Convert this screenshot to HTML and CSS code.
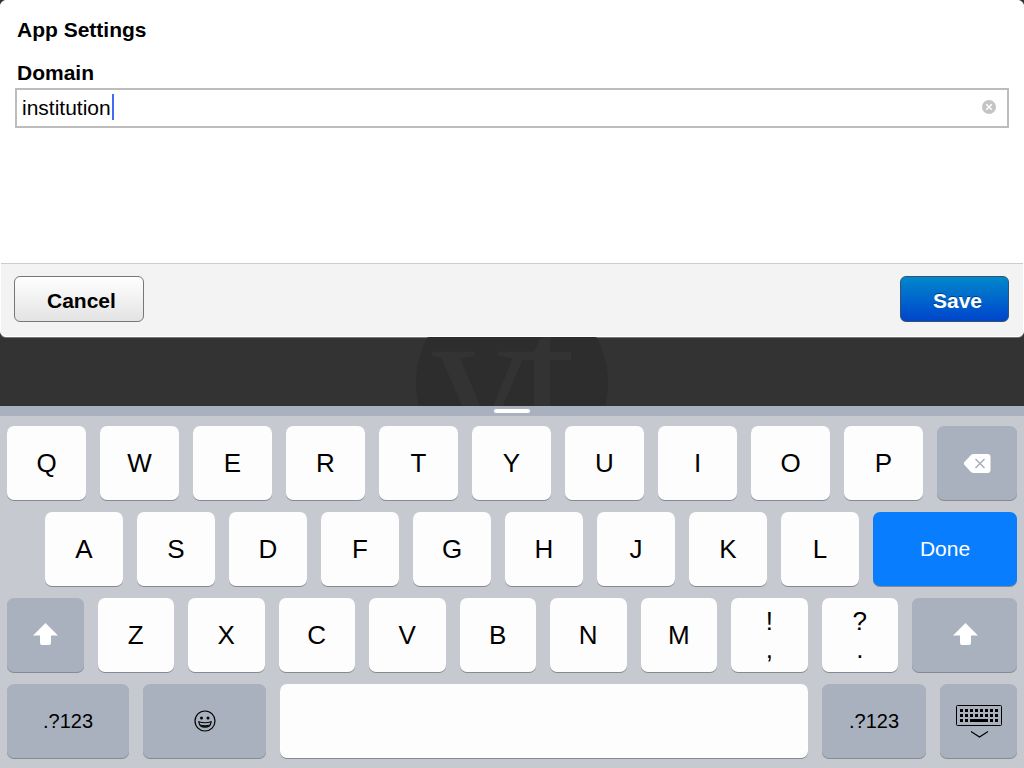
FILE: index.html
```html
<!DOCTYPE html>
<html lang="en">
<head>
    <meta charset="UTF-8">
    <meta name="viewport" content="width=device-width, initial-scale=1.0">
    <title>App Settings</title>
    <link rel="stylesheet" href="styles.css">
</head>
<body>
    <form class="dialog">
        <div class="dialog-body">
            <h1>App Settings</h1>
            <label for="domain">Domain</label>
            <div class="field">
                <input type="text" id="domain" value="institution" autocomplete="off" spellcheck="false">
                <span class="caret"></span>
                <button type="button" class="clear" aria-label="Clear">
                    <svg width="14" height="14" viewBox="0 0 14 14">
                        <circle cx="7" cy="7" r="7" fill="#c4c4c4"/>
                        <path d="M4.2 4.2l5.6 5.6M9.8 4.2L4.2 9.8" stroke="#fff" stroke-width="1.5"/>
                    </svg>
                </button>
            </div>
        </div>
        <div class="dialog-footer">
            <button type="button" class="btn">Cancel</button>
            <button type="submit" class="btn primary">Save</button>
        </div>
    </form>

    <div class="backdrop">
        <svg class="logo" width="192" height="192" viewBox="0 0 192 192">
            <circle cx="96" cy="96" r="96" fill="#2d2d2d"/>
            <text x="16" y="156" class="logo-text">v</text>
            <text x="104" y="156" class="logo-text">t</text>
        </svg>
    </div>

    <div class="keyboard">
        <div class="handle"><span></span></div>
        <div class="rows">
            <div class="row row-1">
                <button type="button">Q</button>
                <button type="button">W</button>
                <button type="button">E</button>
                <button type="button">R</button>
                <button type="button">T</button>
                <button type="button">Y</button>
                <button type="button">U</button>
                <button type="button">I</button>
                <button type="button">O</button>
                <button type="button">P</button>
                <button type="button" class="dark" aria-label="Delete">
                    <svg width="28" height="20" viewBox="0 0 28 20">
                        <path d="M10.5 1H24.500a3 3 0 0 1 3 3v13a3 3 0 0 1-3 3H10.500Q9 20 8 19L1.300 11.700Q.3 10.500 1.300 9.300L8 2Q9 1 10.500 1z" fill="#fff"/>
                        <path d="M12.500 6l9 9M21.500 6l-9 9" stroke="#a9b1be" stroke-width="1.600"/>
                    </svg>
                </button>
            </div>
            <div class="row row-2">
                <button type="button">A</button>
                <button type="button">S</button>
                <button type="button">D</button>
                <button type="button">F</button>
                <button type="button">G</button>
                <button type="button">H</button>
                <button type="button">J</button>
                <button type="button">K</button>
                <button type="button">L</button>
                <button type="button" class="done">Done</button>
            </div>
            <div class="row row-3">
                <button type="button" class="dark" aria-label="Shift">
                    <svg width="26" height="24" viewBox="0 0 26 24">
                        <path d="M13.500 0L26 12.500H19V20a2 2 0 0 1-2 2h-7a2 2 0 0 1-2-2V12.500H1z" fill="#fff"/>
                    </svg>
                </button>
                <button type="button">Z</button>
                <button type="button">X</button>
                <button type="button">C</button>
                <button type="button">V</button>
                <button type="button">B</button>
                <button type="button">N</button>
                <button type="button">M</button>
                <button type="button" class="double"><span>!</span><span>,</span></button>
                <button type="button" class="double"><span>?</span><span>.</span></button>
                <button type="button" class="dark" aria-label="Shift">
                    <svg width="26" height="24" viewBox="0 0 26 24">
                        <path d="M13.500 0L26 12.500H19V20a2 2 0 0 1-2 2h-7a2 2 0 0 1-2-2V12.500H1z" fill="#fff"/>
                    </svg>
                </button>
            </div>
            <div class="row row-4">
                <button type="button" class="dark">.?123</button>
                <button type="button" class="dark" aria-label="Emoji">
                    <svg width="22" height="22" viewBox="0 0 22 22">
                        <circle cx="11" cy="11" r="10" fill="none" stroke="#000" stroke-width="1.200"/>
                        <circle cx="7.500" cy="8" r="1.500"/>
                        <circle cx="14" cy="8" r="1.500"/>
                        <path d="M4.800 11.800Q11 13.600 17.200 11.800Q16.400 17.200 11 17.200T4.800 11.800z" fill="none" stroke="#000" stroke-width="1.100"/>
                        <path d="M6.200 14.600Q11 16 15.800 14.600Q14.200 17 11 17T6.200 14.600z"/>
                    </svg>
                </button>
                <button type="button" aria-label="Space"></button>
                <button type="button" class="dark">.?123</button>
                <button type="button" class="dark" aria-label="Hide keyboard">
                    <svg width="46" height="33" viewBox="0 0 46 33">
                        <rect x=".5" y=".5" width="45" height="20" rx="1" fill="none" stroke="#000"/>
                        <path d="M4 5.500h38M4 10.500h38" stroke="#000" stroke-width="3" stroke-dasharray="3 2"/>
                        <path d="M4 15.500h3M9 15.500h3M14 15.500h18M34 15.500h3M39 15.500h3" stroke="#000" stroke-width="3"/>
                        <path d="M15 26.500l8.500 5.500 8.500-5.500" fill="none" stroke="#000" stroke-width="1.200"/>
                    </svg>
                </button>
            </div>
        </div>
    </div>
</body>
</html>
```

FILE: styles.css
```css
* { box-sizing: border-box; }
body { margin: 0; min-height: 100vh; display: flex; flex-direction: column; background: #333; color: #000; font-family: "Liberation Sans", Arial, sans-serif; }
button { font-family: inherit; margin: 0; padding: 0; border: none; cursor: pointer; }

/* settings dialog */
.dialog { background: #fff; border: 1px solid #fff; border-radius: 6px; box-shadow: 0 1px 0 #777; overflow: hidden; }
.dialog-body { height: 262px; padding: 16px 14px; }
h1 { margin: 0 0 16px 2px; font-size: 21px; line-height: 26px; }
label { display: block; margin-left: 2px; font-size: 21px; font-weight: bold; line-height: 28px; }
.field { position: relative; margin-top: 1px; }
.field input { display: block; width: 100%; height: 40px; padding: 0 40px 0 5px; border: 2px solid #bdbdbd; border-radius: 0; outline: none; background: #fff; color: #000; font-family: inherit; font-size: 21px; }
.caret { position: absolute; left: 97px; top: 6px; width: 2px; height: 26px; background: #426bf2; }
.clear { position: absolute; right: 13px; top: 12px; width: 14px; height: 14px; background: none; }
.clear svg { display: block; }
.dialog-footer { display: flex; justify-content: space-between; padding: 12px 14px 14px 13px; background: #f3f3f3; border-top: 1px solid #ccc; }
.btn { height: 46px; padding: 4px 27px 0 32px; border: 1px solid #777; border-radius: 6px; background: linear-gradient(#fff, #e3e3e3); color: #000; font-size: 21px; font-weight: bold; }
.btn.primary { padding-right: 26px; border-color: #34526f; background: linear-gradient(#0088cc, #0044cc); color: #fff; text-shadow: 0 -1px 0 rgba(0, 0, 0, 0.4); }

/* dimmed page with the logo behind the dialog */
.backdrop { flex: 1; height: 69px; overflow: hidden; display: flex; justify-content: center; align-items: flex-start; }
.logo { flex: none; margin-top: -50px; margin-bottom: -100px; }
.logo-text { fill: #333; font-family: "Liberation Serif", serif; font-size: 200px; }

/* keyboard */
.keyboard { background: #c6c9d0; }
.handle { display: flex; justify-content: center; height: 10px; padding-top: 3px; background: #a9b1be; }
.handle span { width: 36px; height: 4px; border-radius: 2px; background: #fff; }
.rows { display: grid; gap: 12px; padding: 10px 7px; }
.row { display: grid; gap: 14px; }
.row-1 { grid-template-columns: repeat(10, 79fr) 80fr; }
.row-2 { grid-template-columns: repeat(9, 78fr) 144fr; padding-left: 38px; }
.row-3 { grid-template-columns: repeat(10, 153fr) 210fr; }
.row-4 { grid-template-columns: 122fr 123fr 528fr 104fr 77fr; }
.row button { display: flex; align-items: center; justify-content: center; min-width: 0; height: 74px; border-radius: 7px; background: #fdfdfd; box-shadow: 0 1px 0 #858a90; color: #000; font-size: 26px; }
.row button.dark { background: #a9b1be; font-size: 20px; }
.row button.done { background: #087eff; color: #fff; font-size: 21px; }
.row button.double { flex-direction: column; line-height: 28px; }
```
